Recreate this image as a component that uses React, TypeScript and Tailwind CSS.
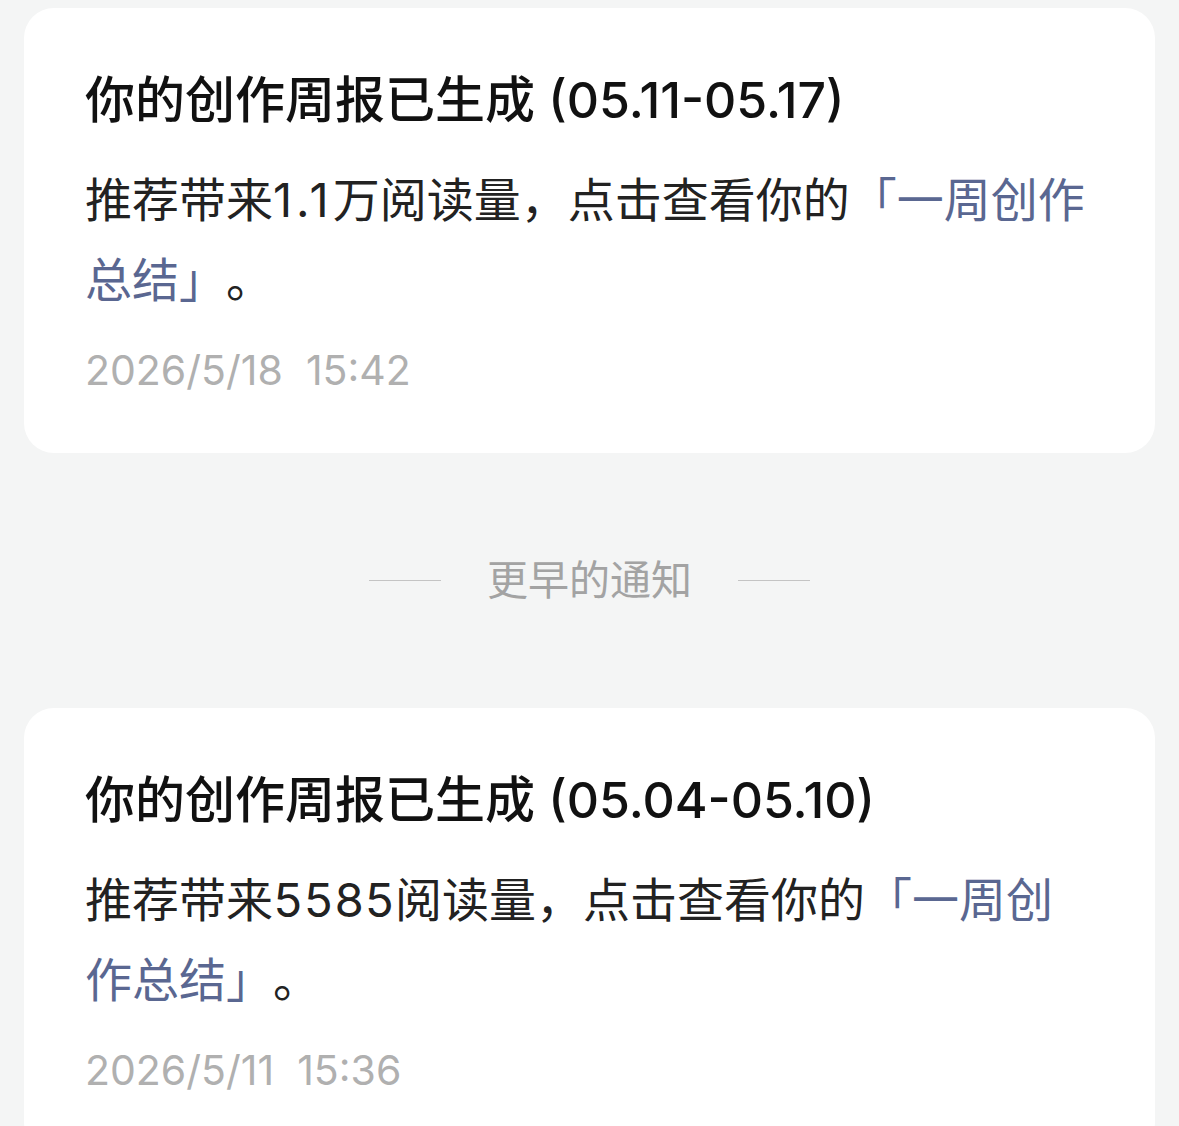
import React from "react";

const font = { fontFamily: 'Inter, "Noto Sans CJK SC", "Noto Sans", sans-serif' };

function Card({
  range,
  num,
  numClass,
  unit,
  time,
}: {
  range: string;
  num: string;
  numClass: string;
  unit: string;
  time: string;
}) {
  return (
    <div className="bg-white rounded-[30px] pl-[61px] pr-[68px] pt-[57px] pb-[53px] [text-spacing-trim:space-all]">
      <div className="text-[50px] leading-[70px] font-medium text-[#111111]">
        你的创作周报已生成 ({range})
      </div>
      <div className="mt-[25px] text-[47px] leading-[80px] text-[#222222]">
        推荐带来<span className={numClass}>{num}</span>
        {unit}阅读量，点击查看你的
        <span className="text-[#5a6791]">「一周创作总结」</span>。
      </div>
      <div className="mt-[20px] text-[41px] leading-[60px] text-[#b0b0b0]">{time}</div>
    </div>
  );
}

export default function App() {
  return (
    <div className="min-h-screen bg-[#f4f5f5] px-[24px] pt-[8px] overflow-hidden" style={font}>
      <Card
        range="05.11-05.17"
        num="1.1"
        numClass="tracking-[4px]"
        unit="万"
        time={"2026/5/18\u00a0\u00a015:42"}
      />
      <div className="flex items-center justify-center mt-[97px] mb-[98px] h-[60px]">
        <div className="w-[72px] h-px bg-[#c4c4c4]" />
        <div className="mx-[46px] text-[41px] leading-[60px] text-[#a3a3a3]">更早的通知</div>
        <div className="w-[72px] h-px bg-[#c4c4c4]" />
      </div>
      <Card
        range="05.04-05.10"
        num="5585"
        numClass="tabular-nums"
        unit=""
        time={"2026/5/11\u00a0\u00a015:36"}
      />
    </div>
  );
}
